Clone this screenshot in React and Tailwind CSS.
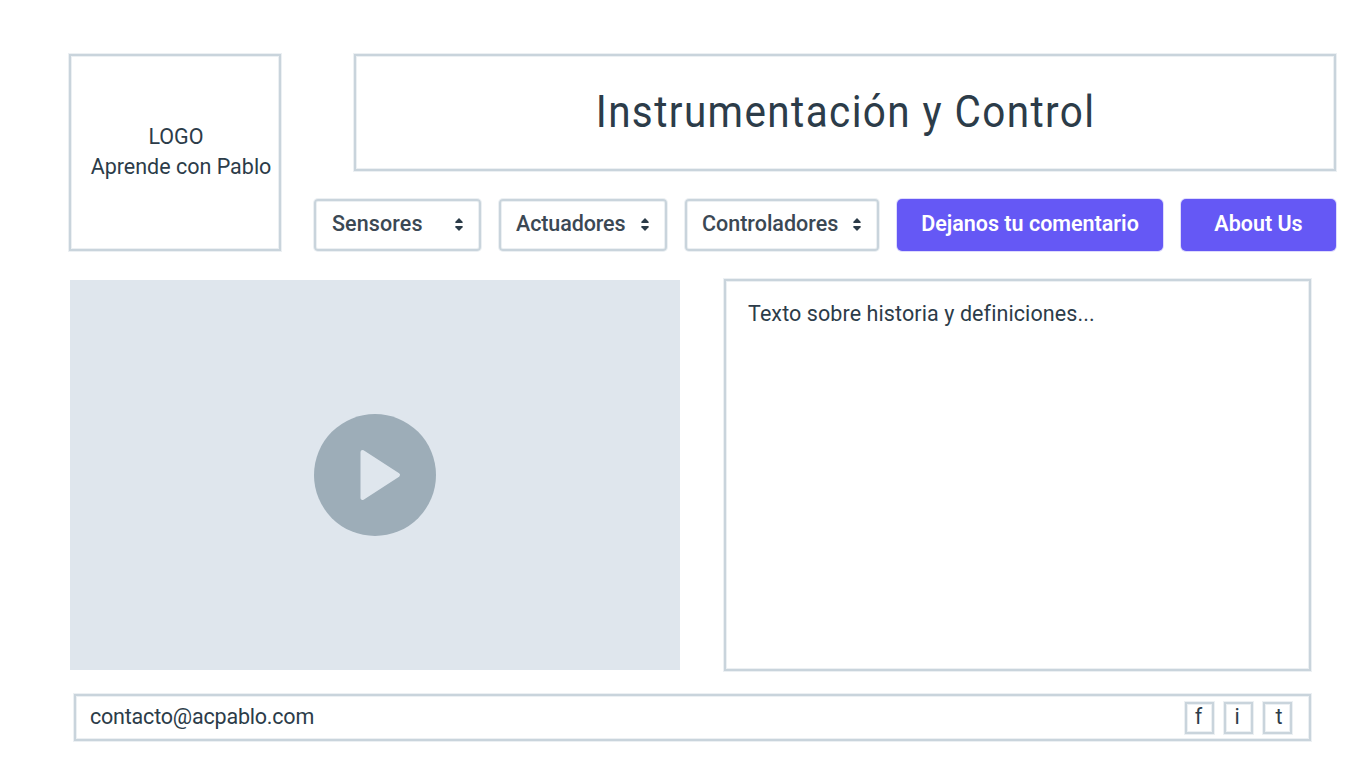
const frame = "border-2 border-[#c9d4dc] shadow-[0_0_0_1px_#ecf0f3,inset_0_0_0_1px_#ecf0f3]";

function Sorter() {
  return (
    <svg width="8" height="13" viewBox="0 0 8 13" fill="#2c3c49" className="shrink-0">
      <path d="M4 0 7.6 3.7q.5 1-.5 1.2H.9q-1-.2-.5-1.2Z" />
      <path d="M4 13 .4 9.3q-.5-1 .5-1.2h6.2q1 .2.5 1.2Z" />
    </svg>
  );
}

function Select({ label, className }) {
  return (
    <button className={`flex h-[52px] shrink-0 items-center justify-between rounded-[4px] pb-[2px] font-medium text-[#3b4854] ${frame} ${className}`}>
      <span className="whitespace-nowrap">{label}</span>
      <Sorter />
    </button>
  );
}

function Social({ label, className }) {
  return (
    <a className={`flex h-[32px] w-[29px] items-center justify-center pb-[2px] ${frame} ${className}`}>{label}</a>
  );
}

export default function App() {
  return (
    <div className="h-[760px] w-[1355px] overflow-hidden bg-white pt-[54px] pl-[69px] font-['Roboto',sans-serif] text-[21.5px] leading-[30px] text-[#2c3c49]">
      <header className="flex h-[197px]">
        <div className={`flex w-[212px] shrink-0 flex-col items-center justify-center pb-px ${frame}`}>
          <span className="pl-[2px]">LOGO</span>
          <span className="pl-[12px] whitespace-nowrap">Aprende con Pablo</span>
        </div>
        <div className="ml-[33px] flex flex-col">
          <h1 className={`ml-[40px] flex h-[117px] w-[982px] items-center justify-center text-[43.5px] leading-none ${frame}`}>
            <span className="scale-x-[.93] pl-[2px] tracking-[1.5px] whitespace-nowrap">Instrumentación y Control</span>
          </h1>
          <nav className="mt-[28px] flex">
            <Select label="Sensores" className="w-[167px] pr-[16px] pl-[16px] tracking-[0.1px]" />
            <Select label="Actuadores" className="ml-[18px] w-[168px] pr-[16px] pl-[15px] tracking-[-0.1px]" />
            <Select label="Controladores" className="ml-[18px] w-[194px] pr-[16px] pl-[15px]" />
            <button className="ml-[18px] h-[52px] w-[266px] rounded-[5px] bg-[#6558f5] pb-[2px] font-semibold text-white shadow-[0_0_0_1px_#dedbfd]">Dejanos tu comentario</button>
            <button className="ml-[18px] h-[52px] w-[155px] rounded-[5px] bg-[#6558f5] pb-[2px] font-semibold text-white shadow-[0_0_0_1px_#dedbfd]">About Us</button>
          </nav>
        </div>
      </header>
      <main className="mt-[28px] ml-px flex items-center gap-[44px]">
        <div className="flex h-[390px] w-[610px] items-center justify-center bg-[#dfe6ed]">
          <svg width="122" height="122" viewBox="0 0 122 122">
            <circle cx="61" cy="61" r="61" fill="#9dadb8" />
            <path d="M48.5 38 84 61 48.5 84Z" fill="#dfe6ed" stroke="#dfe6ed" strokeWidth="4" strokeLinejoin="round" />
          </svg>
        </div>
        <div className={`h-[392px] w-[587px] pt-[18px] pl-[22px] ${frame}`}>
          <p className="tracking-[0.09px]">Texto sobre historia y definiciones...</p>
        </div>
      </main>
      <footer className={`mt-[23px] ml-[5px] flex h-[47px] w-[1237px] items-center justify-between pr-[17px] pl-[14px] ${frame}`}>
        <span className="pb-[2px] tracking-[-0.2px]">contacto@acpablo.com</span>
        <div className="flex gap-[10px]">
          <Social label="f" className="pr-[2px]" />
          <Social label="i" className="pr-[3px]" />
          <Social label="t" className="pl-[3px]" />
        </div>
      </footer>
    </div>
  );
}
